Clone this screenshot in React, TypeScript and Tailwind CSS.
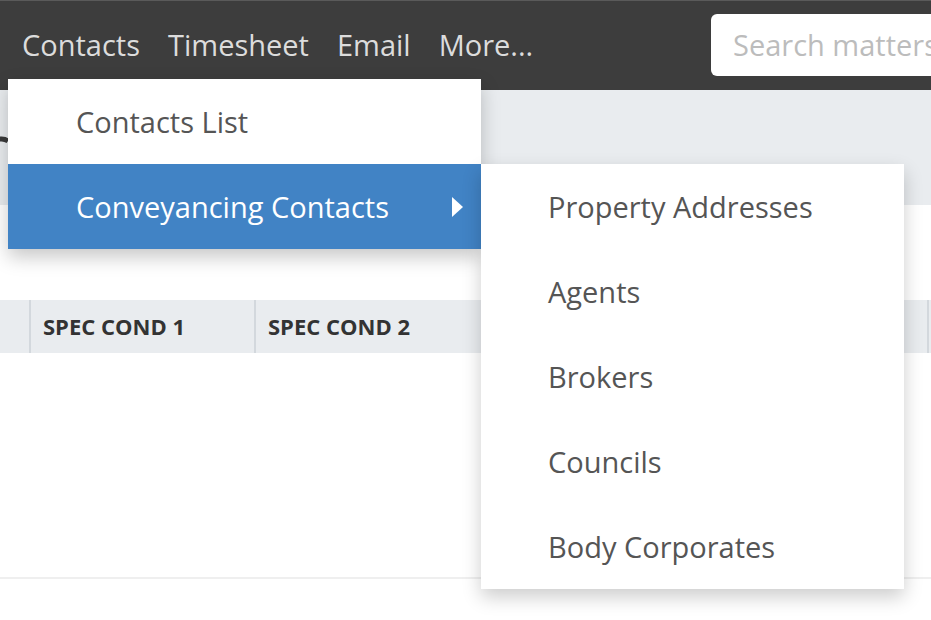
import { useState } from "react";

const navItems = ["Contacts", "Timesheet", "Email", "More..."];
const subItems = ["Property Addresses", "Agents", "Brokers", "Councils", "Body Corporates"];

export default function App() {
  const [active] = useState("Conveyancing Contacts");

  return (
    <div
      className="relative h-[620px] w-[931px] overflow-hidden bg-white text-[#555]"
      style={{ fontFamily: '"Open Sans", "Noto Sans", sans-serif' }}
    >
      <header className="flex h-[90px] items-center border-t border-[#5a5a5a] bg-[#3d3d3d] pl-2">
        <nav className="flex">
          {navItems.map((item) => (
            <a key={item} className="px-[14px] text-[29px] leading-none text-[#dcdcdc] -mt-[2px]">
              {item}
            </a>
          ))}
        </nav>
        <div className="ml-auto flex h-[62px] w-[240px] items-center rounded-l-md bg-white pl-[22px] -mr-[20px] mt-[-2px]">
          <span className="whitespace-nowrap text-[29px] text-[#bcbcbc]">Search matters</span>
        </div>
      </header>

      <div className="relative h-[115px] bg-[#e9ecef]">
        <svg className="absolute left-[-12px] top-[44px]" width="30" height="30" viewBox="0 0 30 30">
          <path d="M7 26 A 11 11 0 0 1 20 7" fill="none" stroke="#3a3a3a" strokeWidth="5" />
        </svg>
      </div>

      <div className="mt-[95px] flex h-[53px] items-center bg-[#e9ecef] text-[22px] font-bold text-[#333]">
        <div className="h-full w-[31px] border-r-2 border-[#d3d8dd]" />
        <div className="flex h-full w-[225px] items-center border-r-2 border-[#d3d8dd] pl-[12px]">SPEC COND 1</div>
        <div className="flex h-full w-[673px] items-center border-r-2 border-[#d3d8dd] pl-[12px]">SPEC COND 2</div>
      </div>

      <div className="mt-[224px] h-[2px] bg-[#efefef]" />

      {/* dropdown */}
      <div className="absolute left-[8px] top-[79px] w-[473px] bg-white shadow-[0_8px_18px_rgba(0,0,0,0.22)]">
        <div className="flex h-[85px] items-center pl-[68px] text-[29px]">Contacts List</div>
        <div className="flex h-[85px] items-center justify-between bg-[#4183c5] pl-[68px] pr-[18px] text-[29px] text-white">
          <span>{active}</span>
          <svg width="11" height="20" viewBox="0 0 11 20">
            <path d="M0 0 L11 10 L0 20 Z" fill="white" />
          </svg>
        </div>
      </div>

      {/* submenu */}
      <div className="absolute left-[481px] top-[164px] w-[423px] bg-white shadow-[0_8px_18px_rgba(0,0,0,0.2)]">
        {subItems.map((item) => (
          <div key={item} className="flex h-[85px] items-center pl-[67px] text-[29px]">
            {item}
          </div>
        ))}
      </div>
    </div>
  );
}
